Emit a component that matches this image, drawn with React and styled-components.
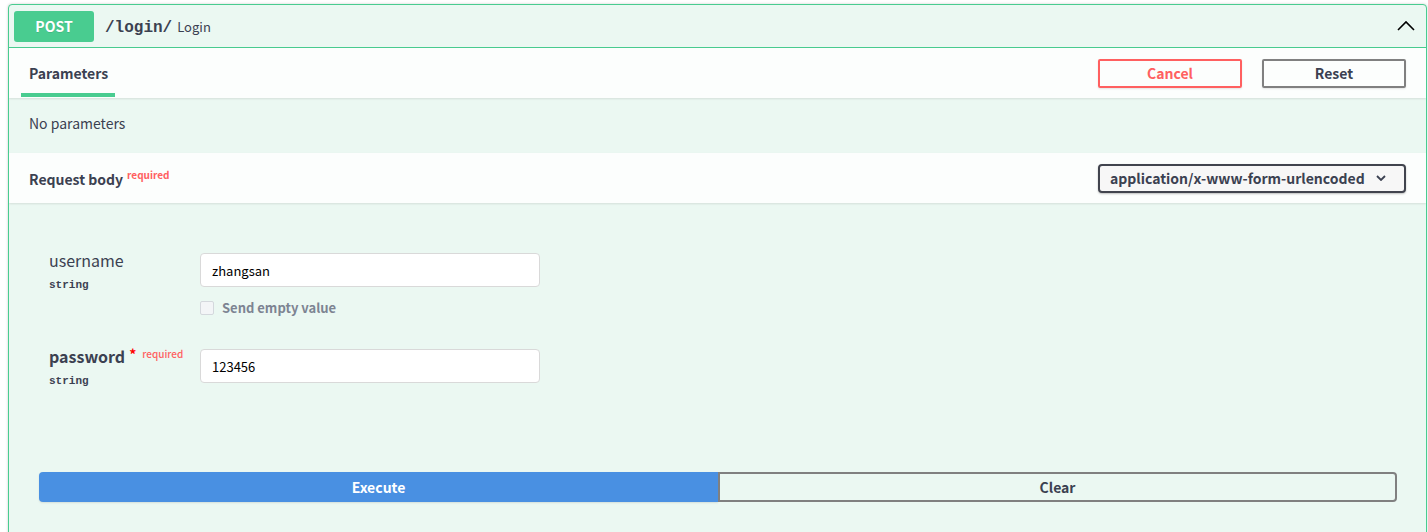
import React from 'react'
import styled, { createGlobalStyle } from 'styled-components'

const Global = createGlobalStyle`
  body {
    margin: 0;
    background: #fff;
    font-family: "Noto Sans CJK SC", "Noto Sans", sans-serif;
    color: #3b4151;
  }
`

const Page = styled.div`
  padding: 4px 1px 0 8px;
`

const Block = styled.div`
  border: 1px solid #49cc90;
  border-radius: 4px;
  background: #ebf8f2;
  box-shadow: 0 0 3px rgba(0, 0, 0, 0.19);
  overflow: hidden;
  height: 560px;
`

const Summary = styled.div`
  display: flex;
  align-items: center;
  height: 42px;
  padding: 0 5px;
  border-bottom: 1px solid #49cc90;
`

const Method = styled.span`
  display: inline-flex;
  align-items: center;
  justify-content: center;
  width: 80px;
  height: 31px;
  border-radius: 3px;
  background: #49cc90;
  color: #fff;
  font-weight: 700;
  font-size: 14px;
  text-shadow: 0 1px 0 rgba(0, 0, 0, 0.1);
`

const Title = styled.div`
  flex: 1;
  display: flex;
  align-items: baseline;
  margin-left: 11px;
  padding-top: 2px;
`

const Path = styled.span`
  font-family: "Liberation Mono", monospace;
  font-weight: 700;
  font-size: 16px;
  color: #3b4151;
`

const Desc = styled.span`
  margin-left: 5px;
  font-size: 13px;
  color: #3b4151;
`

const Chevron = styled.svg`
  width: 20px;
  height: 20px;
  margin-right: 5px;
`

const SectionHeader = styled.div`
  display: flex;
  align-items: center;
  height: 50px;
  padding: 0 20px 0 12px;
  background: rgba(255, 255, 255, 0.85);
  box-shadow: 0 1px 2px rgba(0, 0, 0, 0.1);
`

const Tab = styled.div`
  position: relative;
  height: 100%;
  display: flex;
  align-items: center;
  padding: 0 7px 0 8px;
  font-size: 14px;
  font-weight: 700;

  &::after {
    content: '';
    position: absolute;
    left: 0;
    right: 0;
    bottom: 1px;
    height: 4px;
    background: #49cc90;
    display: ${p => (p.$active ? 'block' : 'none')};
  }
`

const Spacer = styled.div`
  flex: 1;
`

const Btn = styled.button`
  width: 144px;
  height: 29px;
  margin-left: 20px;
  border: 2px solid ${p => p.$color};
  border-radius: 2px;
  background: transparent;
  color: ${p => (p.$danger ? '#ff6060' : '#3b4151')};
  font-family: inherit;
  font-weight: 700;
  font-size: 14px;
  box-shadow: 0 1px 2px rgba(0, 0, 0, 0.1);
`

const NoParams = styled.div`
  height: 55px;
  box-sizing: border-box;
  padding: 0 20px 5px 20px;
  display: flex;
  align-items: center;
  font-size: 14px;
`

const BodyTitle = styled.div`
  flex: 1;
  padding-left: 8px;
  font-size: 14px;
  font-weight: 700;
`

const Req = styled.sup`
  margin-left: 4px;
  font-size: 10px;
  color: #ff6060;
  font-weight: 600;
  vertical-align: 6px;
`

const Select = styled.div`
  display: flex;
  align-items: center;
  justify-content: space-between;
  width: 308px;
  height: 29px;
  padding: 0 18px 0 10px;
  box-sizing: border-box;
  border: 2px solid #41444e;
  border-radius: 4px;
  background: #f7f7f7;
  box-shadow: 0 1px 2px rgba(0, 0, 0, 0.25);
  font-size: 14px;
  font-weight: 700;
  color: #3b4151;
`

const Form = styled.div`
  padding: 50px 20px 0 40px;
`

const Row = styled.div`
  display: grid;
  grid-template-columns: 151px 340px;
  margin-bottom: ${p => p.$mb}px;
`

const Name = styled.div`
  font-size: 16px;
  font-weight: ${p => (p.$bold ? 700 : 400)};
  display: flex;
  align-items: baseline;
  margin-top: -5px;
`

const Star = styled.span`
  color: red;
  font-size: 14px;
  margin-left: 4px;
  position: relative;
  top: -3px;
`

const SmallReq = styled.span`
  color: #ff6060;
  font-size: 10px;
  font-weight: 500;
  margin-left: 6px;
  position: relative;
  top: -5px;
`

const Type = styled.div`
  font-family: "Liberation Mono", monospace;
  font-size: 11px;
  font-weight: 700;
  margin-top: 7px;
`

const Input = styled.div`
  height: 34px;
  box-sizing: border-box;
  padding: 0 11px;
  display: flex;
  align-items: center;
  background: #fff;
  border: 1px solid #d9d9d9;
  border-radius: 4px;
  font-size: 13px;
  color: #000;
`

const CheckRow = styled.label`
  display: flex;
  align-items: center;
  margin-top: 11px;
  font-size: 13px;
  font-weight: 700;
  color: #7d8492;
`

const Box = styled.span`
  width: 12px;
  height: 12px;
  border: 1px solid #d4d8dd;
  border-radius: 2px;
  background: #f3f5f7;
  margin-right: 8px;
`

const Actions = styled.div`
  display: flex;
  padding: 85px 29px 0 30px;
`

const Execute = styled.button`
  width: 50%;
  height: 30px;
  border: none;
  border-radius: 4px 0 0 4px;
  background: #4990e2;
  color: #fff;
  font-family: inherit;
  font-weight: 700;
  font-size: 14px;
  box-shadow: 0 1px 2px rgba(0, 0, 0, 0.1);
`

const Clear = styled.button`
  width: 50%;
  height: 30px;
  border: 2px solid #808080;
  border-radius: 0 4px 4px 0;
  background: transparent;
  color: #3b4151;
  font-family: inherit;
  font-weight: 700;
  font-size: 14px;
`

export default function App() {
  return (
    <Page>
      <Global />
      <Block>
        <Summary>
          <Method>POST</Method>
          <Title>
            <Path>/login/</Path>
            <Desc>Login</Desc>
          </Title>
          <Chevron viewBox="0 0 20 20">
            <path d="M2 14 L10 6 L18 14" fill="none" stroke="#000" strokeWidth="1.6" />
          </Chevron>
        </Summary>

        <SectionHeader>
          <Tab $active>Parameters</Tab>
          <Spacer />
          <Btn $danger $color="#ff6060">Cancel</Btn>
          <Btn $color="#808080">Reset</Btn>
        </SectionHeader>

        <NoParams>No parameters</NoParams>

        <SectionHeader>
          <BodyTitle>
            Request body<Req>required</Req>
          </BodyTitle>
          <Select>
            <span>application/x-www-form-urlencoded</span>
            <svg width="10" height="6" viewBox="0 0 10 6">
              <path d="M1 1 L5 5 L9 1" fill="none" stroke="#3b4151" strokeWidth="1.8" />
            </svg>
          </Select>
        </SectionHeader>

        <Form>
          <Row $mb={32}>
            <div>
              <Name>username</Name>
              <Type>string</Type>
            </div>
            <div>
              <Input>zhangsan</Input>
              <CheckRow>
                <Box />
                Send empty value
              </CheckRow>
            </div>
          </Row>
          <Row $mb={0}>
            <div>
              <Name $bold>
                password<Star>*</Star>
                <SmallReq>required</SmallReq>
              </Name>
              <Type>string</Type>
            </div>
            <div>
              <Input>123456</Input>
            </div>
          </Row>
        </Form>

        <Actions>
          <Execute>Execute</Execute>
          <Clear>Clear</Clear>
        </Actions>
      </Block>
    </Page>
  )
}
